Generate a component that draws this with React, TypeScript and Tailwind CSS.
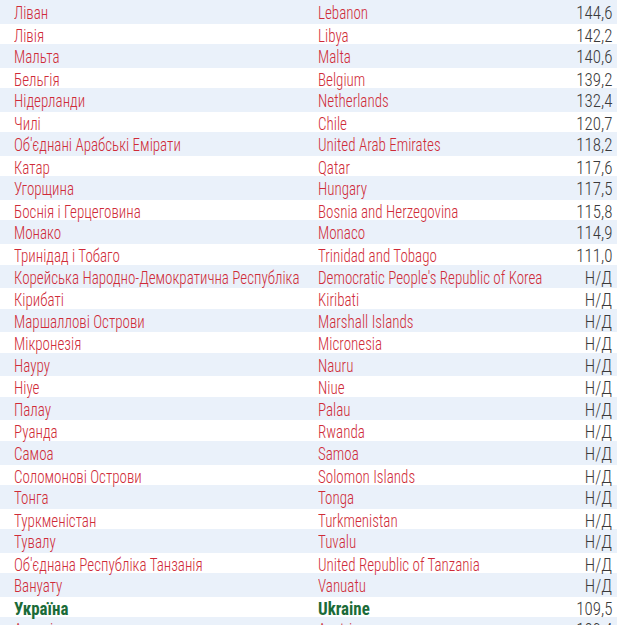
type Row = { ua: string; en: string; value: string };

const rows: Row[] = [
  { ua: "Ліван", en: "Lebanon", value: "144,6" },
  { ua: "Лівія", en: "Libya", value: "142,2" },
  { ua: "Мальта", en: "Malta", value: "140,6" },
  { ua: "Бельгія", en: "Belgium", value: "139,2" },
  { ua: "Нідерланди", en: "Netherlands", value: "132,4" },
  { ua: "Чилі", en: "Chile", value: "120,7" },
  { ua: "Об'єднані Арабські Емірати", en: "United Arab Emirates", value: "118,2" },
  { ua: "Катар", en: "Qatar", value: "117,6" },
  { ua: "Угорщина", en: "Hungary", value: "117,5" },
  { ua: "Боснія і Герцеговина", en: "Bosnia and Herzegovina", value: "115,8" },
  { ua: "Монако", en: "Monaco", value: "114,9" },
  { ua: "Тринідад і Тобаго", en: "Trinidad and Tobago", value: "111,0" },
  { ua: "Корейська Народно-Демократична Республіка", en: "Democratic People's Republic of Korea", value: "Н/Д" },
  { ua: "Кірибаті", en: "Kiribati", value: "Н/Д" },
  { ua: "Маршаллові Острови", en: "Marshall Islands", value: "Н/Д" },
  { ua: "Мікронезія", en: "Micronesia", value: "Н/Д" },
  { ua: "Науру", en: "Nauru", value: "Н/Д" },
  { ua: "Ніуе", en: "Niue", value: "Н/Д" },
  { ua: "Палау", en: "Palau", value: "Н/Д" },
  { ua: "Руанда", en: "Rwanda", value: "Н/Д" },
  { ua: "Самоа", en: "Samoa", value: "Н/Д" },
  { ua: "Соломонові Острови", en: "Solomon Islands", value: "Н/Д" },
  { ua: "Тонга", en: "Tonga", value: "Н/Д" },
  { ua: "Туркменістан", en: "Turkmenistan", value: "Н/Д" },
  { ua: "Тувалу", en: "Tuvalu", value: "Н/Д" },
  { ua: "Об'єднана Республіка Танзанія", en: "United Republic of Tanzania", value: "Н/Д" },
  { ua: "Вануату", en: "Vanuatu", value: "Н/Д" },
  { ua: "Україна", en: "Ukraine", value: "109,5" },
  { ua: "Австрія", en: "Austria", value: "109,4" },
];

export default function App() {
  return (
    <div className="w-[617px] h-[625px] overflow-hidden bg-white font-['Roboto_Condensed',Roboto,sans-serif] text-[18px] leading-[20px] font-light">
      {rows.map((r, i) => {
        const home = r.en === "Ukraine";
        const name = home
          ? "scale-x-[0.94] text-[#1b6b38] font-bold"
          : "scale-x-[0.835] text-[#cf2b38]";
        return (
          <div
            key={r.en}
            className={
              "grid grid-cols-[304px_minmax(0,1fr)_auto] items-start pl-[14px] pr-[5px] " +
              (i % 2 === 0 ? "h-[23.6px] pt-[3px] bg-[#eaf1fa]" : "h-[20.5px] pt-[2px] bg-white")
            }
          >
            <span className={"block origin-left whitespace-nowrap " + name}>{r.ua}</span>
            <span className={"block origin-left whitespace-nowrap " + name}>{r.en}</span>
            <span className="block origin-right scale-x-[0.94] text-right text-[#3a3a3a]">{r.value}</span>
          </div>
        );
      })}
    </div>
  );
}
